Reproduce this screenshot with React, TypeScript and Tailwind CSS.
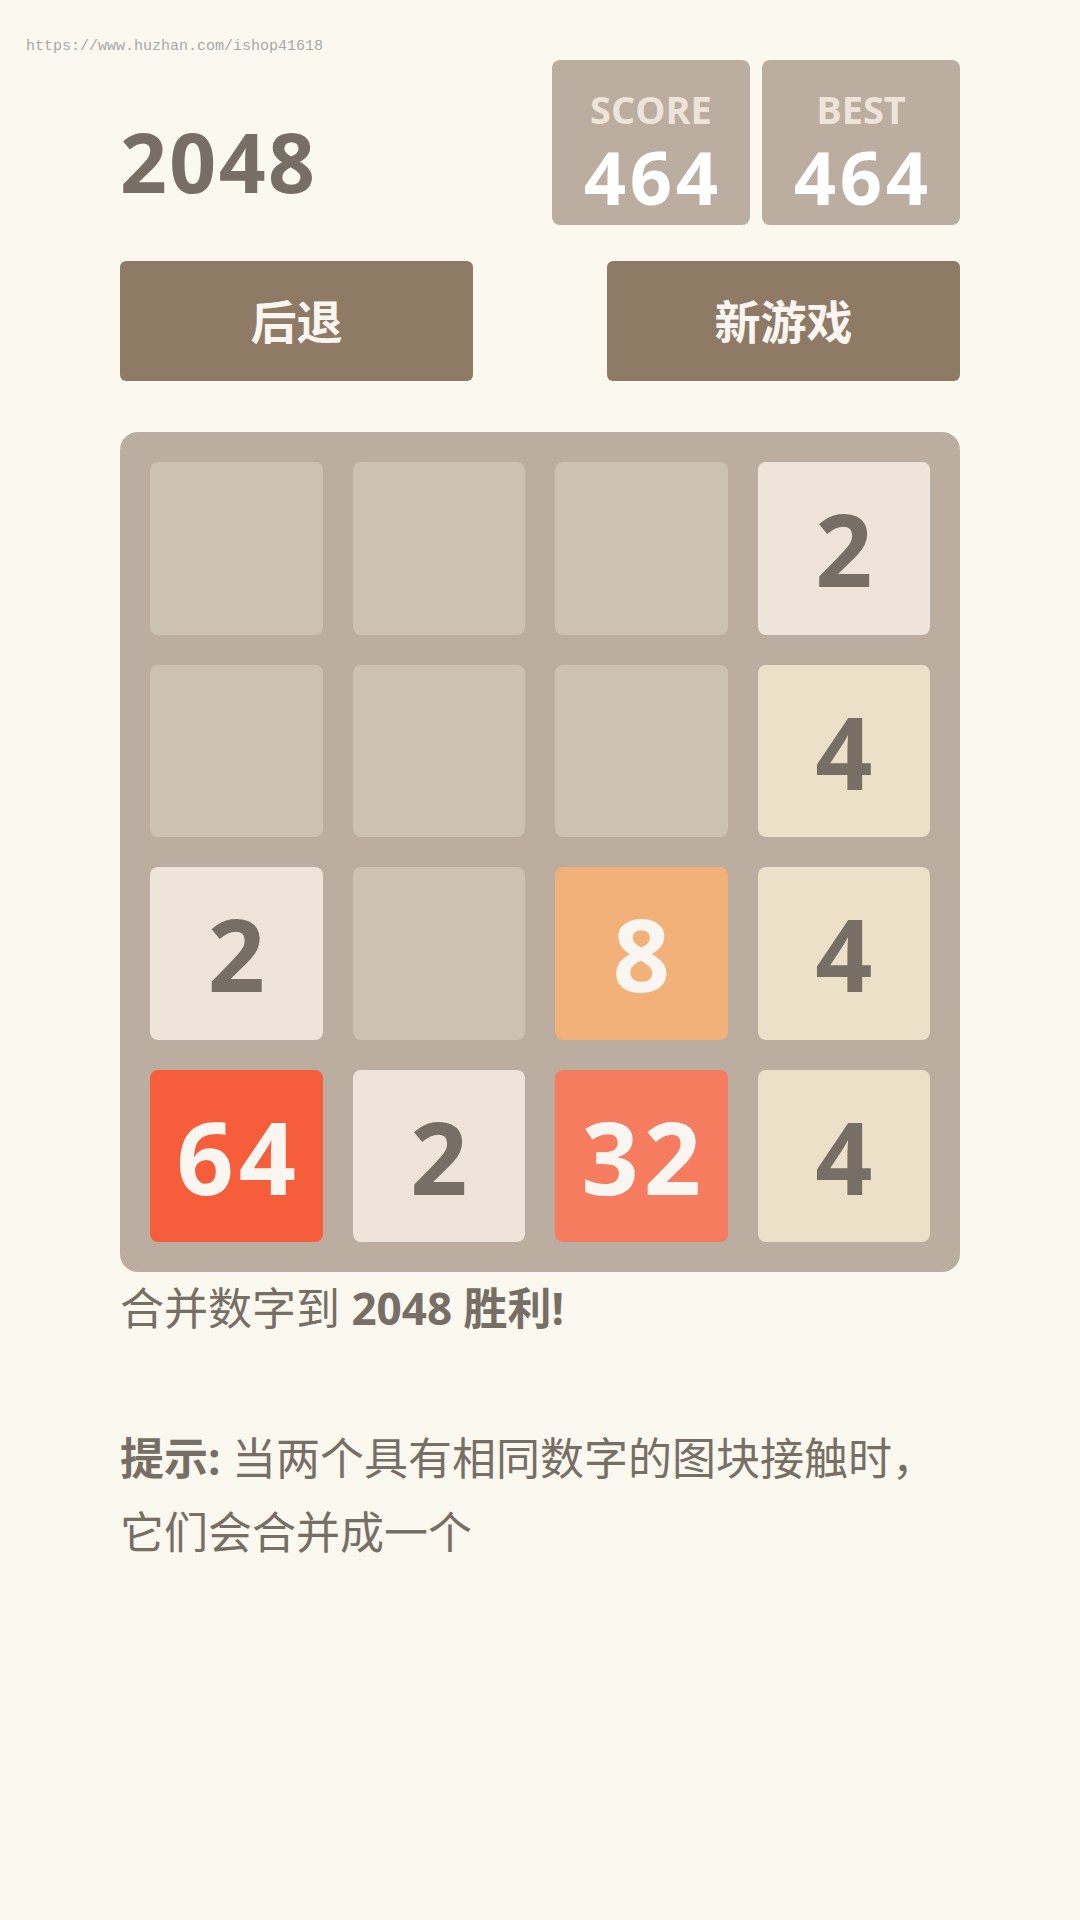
import React from 'react';

type Tile = number | null;

const board: Tile[][] = [
  [null, null, null, 2],
  [null, null, null, 4],
  [2, null, 8, 4],
  [64, 2, 32, 4],
];

const tileStyle: Record<number, string> = {
  2: 'bg-[#eee4da] text-[#776e65]',
  4: 'bg-[#ede0c8] text-[#776e65]',
  8: 'bg-[#f2b179] text-[#f9f6f2]',
  32: 'bg-[#f67c5f] text-[#f9f6f2]',
  64: 'bg-[#f65e3b] text-[#f9f6f2]',
};

const ScoreBox: React.FC<{ label: string; value: number }> = ({ label, value }) => (
  <div className="w-[198px] h-[165px] rounded-[8px] bg-[#bbada0] flex flex-col items-center pt-[31px]">
    <div className="text-[38px] leading-[36px] font-bold text-[#eee4da]">{label}</div>
    <div className="pl-[0.05em] text-[74px] leading-[100px] tracking-[0.05em] font-bold text-white">
      {value}
    </div>
  </div>
);

const Cell: React.FC<{ value: Tile }> = ({ value }) => {
  if (value === null) {
    return <div className="rounded-[8px] bg-[#cdc1b4]" />;
  }
  return (
    <div
      className={`rounded-[8px] flex items-center justify-center pl-[0.05em] text-[100px] leading-none tracking-[0.05em] font-bold ${tileStyle[value]}`}
    >
      {value}
    </div>
  );
};

export default function App() {
  return (
    <div
      className="relative min-h-[1920px] w-[1080px] bg-[#faf8ef] text-[#776e65]"
      style={{ fontFamily: '"Open Sans", "Noto Sans CJK SC", sans-serif' }}
    >
      {/* watermark */}
      <div
        className="absolute left-[26px] top-[37px] text-[15px] leading-[20px] text-[#a8a8a8]"
        style={{ fontFamily: '"Liberation Mono", monospace' }}
      >
        https://www.huzhan.com/ishop41618
      </div>

      <div className="ml-[120px] w-[840px] pt-[60px]">
        <div className="flex justify-between items-start">
          <h1 className="mt-[60px] text-[82px] leading-none tracking-[0.03em] font-bold">2048</h1>
          <div className="flex gap-[12px]">
            <ScoreBox label="SCORE" value={464} />
            <ScoreBox label="BEST" value={464} />
          </div>
        </div>

        <div className="mt-[36px] flex justify-between">
          <button className="w-[353px] h-[120px] rounded-[6px] bg-[#8f7a66] text-[#f9f6f2] text-[46px] font-bold">
            后退
          </button>
          <button className="w-[353px] h-[120px] rounded-[6px] bg-[#8f7a66] text-[#f9f6f2] text-[46px] font-bold">
            新游戏
          </button>
        </div>

        <div className="mt-[51px] w-[840px] h-[840px] rounded-[18px] bg-[#bbada0] p-[30px] grid grid-cols-4 grid-rows-4 gap-[30px]">
          {board.flat().map((v, i) => (
            <Cell key={i} value={v} />
          ))}
        </div>

        <p className="text-[44px] leading-[72px]">
          合并数字到 <strong className="font-bold">2048 胜利!</strong>
        </p>

        <p className="mt-[77px] text-[44px] leading-[74px]">
          <strong className="font-bold">提示:</strong> 当两个具有相同数字的图块接触时，它们会合并成一个
        </p>
      </div>
    </div>
  );
}
